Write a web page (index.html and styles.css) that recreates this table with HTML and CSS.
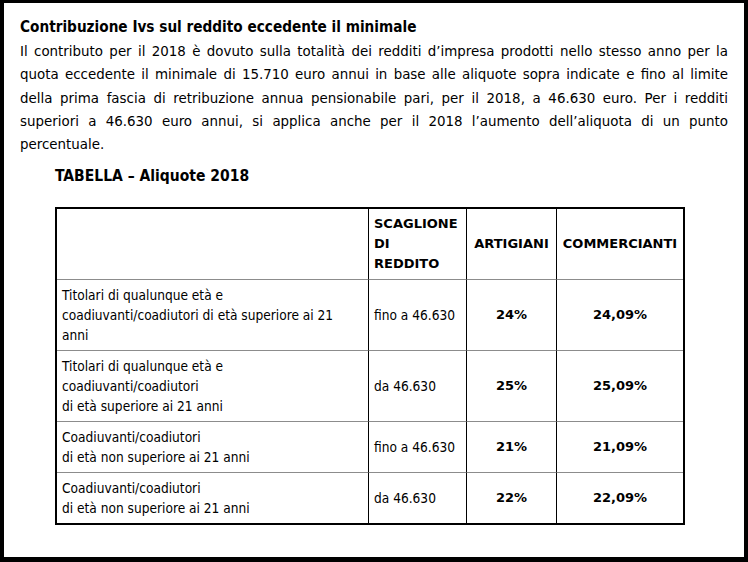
FILE: index.html
```html
<!DOCTYPE html>
<html lang="it">
<head>
<meta charset="utf-8">
<title>Contribuzione Ivs</title>
<link rel="stylesheet" href="styles.css">
</head>
<body>
<div class="frame">
  <h1 class="title">Contribuzione Ivs sul reddito eccedente il minimale</h1>
  <p class="intro">
    <span class="ln">Il contributo per il 2018 è dovuto sulla totalità dei redditi d’impresa prodotti nello stesso anno per la</span>
    <span class="ln">quota eccedente il minimale di 15.710 euro annui in base alle aliquote sopra indicate e fino al limite</span>
    <span class="ln">della prima fascia di retribuzione annua pensionabile pari, per il 2018, a 46.630 euro. Per i redditi</span>
    <span class="ln">superiori a 46.630 euro annui, si applica anche per il 2018 l’aumento dell’aliquota di un punto</span>
    <span class="ln last">percentuale.</span>
  </p>
  <h2 class="tab-title">TABELLA – Aliquote 2018</h2>
  <table class="rates">
    <colgroup>
      <col class="c1"><col class="c2"><col class="c3"><col class="c4">
    </colgroup>
    <tr class="head">
      <td></td>
      <td class="hl">SCAGLIONE<br>DI<br>REDDITO</td>
      <td class="hc">ARTIGIANI</td>
      <td class="hc">COMMERCIANTI</td>
    </tr>
    <tr>
      <td>Titolari di qualunque età e<br>coadiuvanti/coadiutori di età superiore ai 21<br>anni</td>
      <td>fino a 46.630</td>
      <td class="pct">24%</td>
      <td class="pct">24,09%</td>
    </tr>
    <tr>
      <td>Titolari di qualunque età e<br>coadiuvanti/coadiutori<br>di età superiore ai 21 anni</td>
      <td>da 46.630</td>
      <td class="pct">25%</td>
      <td class="pct">25,09%</td>
    </tr>
    <tr>
      <td>Coadiuvanti/coadiutori<br>di età non superiore ai 21 anni</td>
      <td>fino a 46.630</td>
      <td class="pct">21%</td>
      <td class="pct">21,09%</td>
    </tr>
    <tr>
      <td>Coadiuvanti/coadiutori<br>di età non superiore ai 21 anni</td>
      <td>da 46.630</td>
      <td class="pct">22%</td>
      <td class="pct">22,09%</td>
    </tr>
  </table>
</div>
</body>
</html>
```

FILE: styles.css
```css
html, body {
  margin: 0;
  padding: 0;
}
body {
  background: #000;
  padding: 3px 4px 5px 4px;
  font-family: "DejaVu Sans Condensed", "DejaVu Sans", sans-serif;
  color: #000;
}
.frame {
  background: #fff;
  height: 554px;
  box-sizing: border-box;
  padding: 13px 16px 0 16px;
}
.title {
  margin: 0 0 1px 0;
  font-size: 15.2px;
  font-weight: bold;
  line-height: 23px;
}
.intro {
  margin: 0;
  font-size: 14.9px;
  line-height: 23.25px;
}
.ln {
  display: block;
  text-align: justify;
  text-align-last: justify;
  white-space: nowrap;
}
.ln.last {
  text-align-last: left;
}
.tab-title {
  margin: 9px 0 0 35px;
  font-size: 15.5px;
  font-weight: bold;
  line-height: 23px;
}
.rates {
  margin: 19px 0 0 35px;
  width: 630px;
  border: 2px solid #000;
  border-collapse: separate;
  border-spacing: 0;
  table-layout: fixed;
  font-size: 13.6px;
  line-height: 20px;
}
.c1 { width: 312px; }
.c2 { width: 98px; }
.c3 { width: 90px; }
.c4 { width: 126px; }
.rates td {
  padding: 5px 5px;
  border-right: 1px solid #000;
  border-bottom: 1px solid #8c8c8c;
  vertical-align: middle;
  text-align: left;
  white-space: nowrap;
}
.rates td:last-child {
  border-right: 0;
}
.rates tr:last-child td {
  border-bottom: 0;
}
.hl, .hc, .pct {
  font-family: "DejaVu Sans", sans-serif;
  font-weight: bold;
  font-size: 13px;
}
.hl {
  padding-left: 4px;
}
.hc, .pct {
  text-align: center !important;
}
```
